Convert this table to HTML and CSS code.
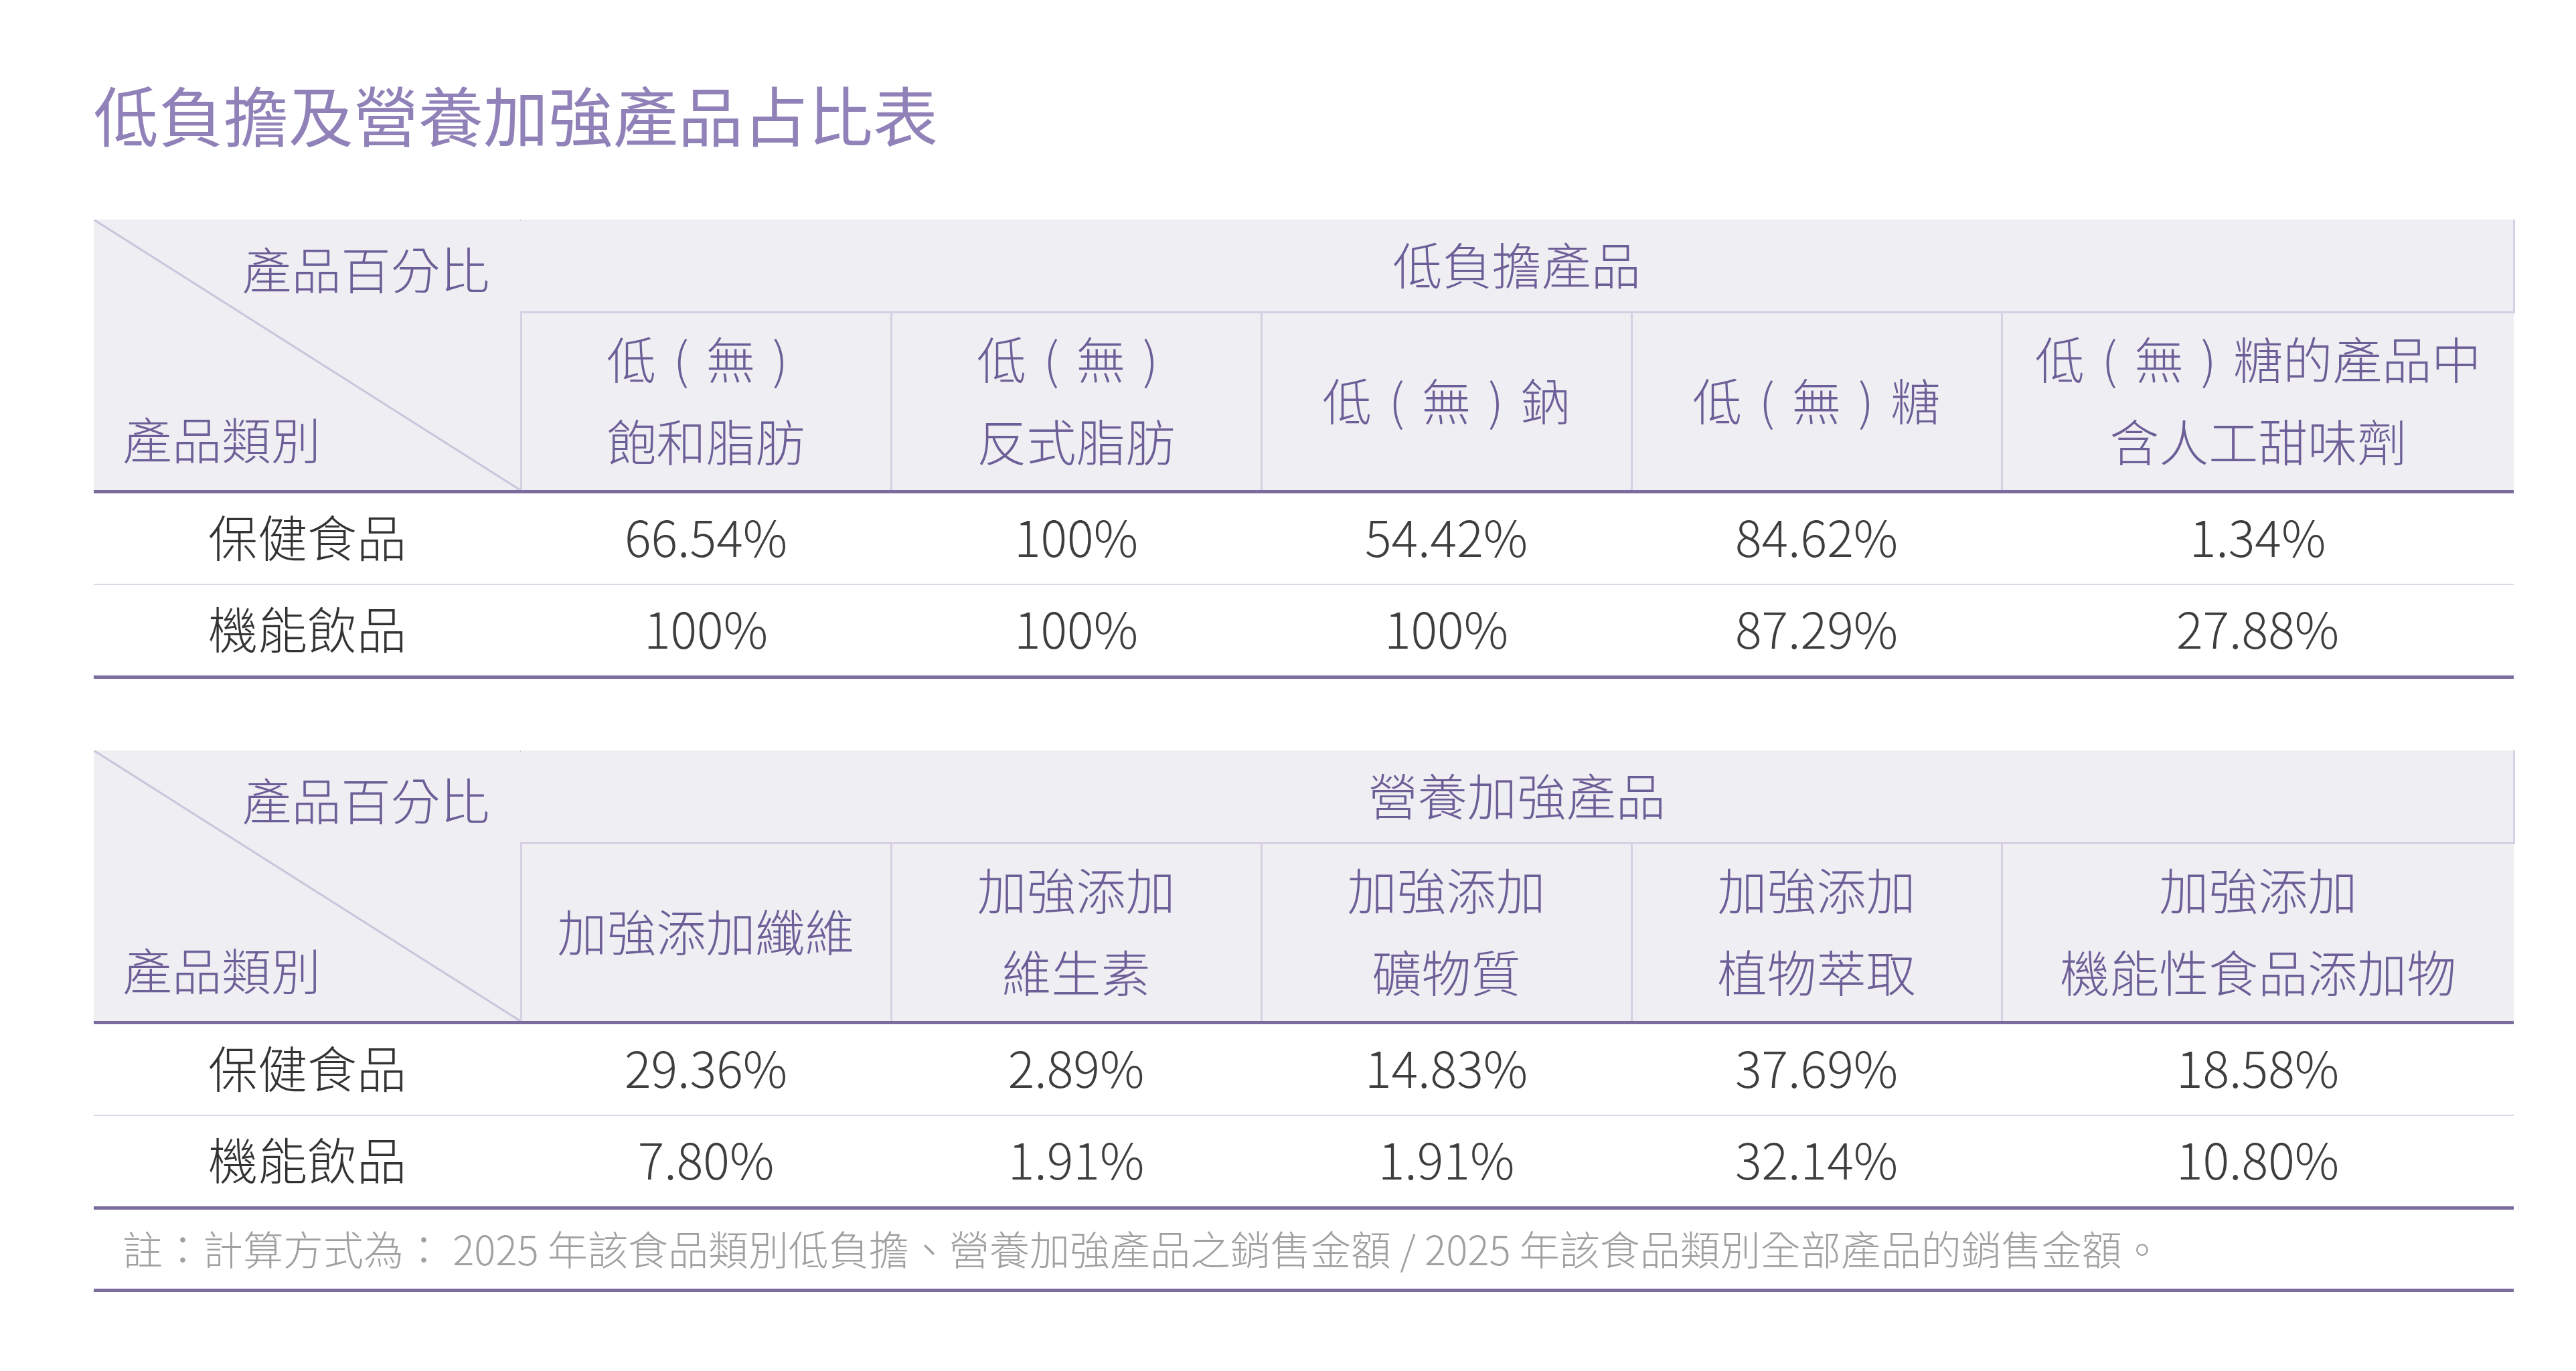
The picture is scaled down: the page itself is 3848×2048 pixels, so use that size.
FILE: index.html
```html
<!DOCTYPE html>
<html lang="zh-Hant">
<head>
<meta charset="utf-8">
<title>低負擔及營養加強產品占比表</title>
<link rel="stylesheet" href="styles.css">
</head>
<body>
<main class="page">
  <h1 class="title">低負擔及營養加強產品占比表</h1>

  <table class="ratio">
    <colgroup>
      <col class="c-cat"><col class="c-mid"><col class="c-mid"><col class="c-mid"><col class="c-mid"><col class="c-last">
    </colgroup>
    <thead>
      <tr class="h1">
        <th rowspan="2" class="corner">
          <div class="corner-box">
            <span class="corner-top">產品百分比</span>
            <span class="corner-bottom">產品類別</span>
          </div>
        </th>
        <th colspan="5" class="group">低負擔產品</th>
      </tr>
      <tr class="h2">
        <th>低<span class="paren">(</span>無<span class="paren">)</span><br>飽和脂肪</th>
        <th>低<span class="paren">(</span>無<span class="paren">)</span><br>反式脂肪</th>
        <th>低<span class="paren">(</span>無<span class="paren">)</span>鈉</th>
        <th>低<span class="paren">(</span>無<span class="paren">)</span>糖</th>
        <th class="last">低<span class="paren">(</span>無<span class="paren">)</span>糖的產品中<br>含人工甜味劑</th>
      </tr>
    </thead>
    <tbody>
      <tr class="r1">
        <td class="cat">保健食品</td><td>66.54%</td><td>100%</td><td>54.42%</td><td>84.62%</td><td>1.34%</td>
      </tr>
      <tr class="r2">
        <td class="cat">機能飲品</td><td>100%</td><td>100%</td><td>100%</td><td>87.29%</td><td>27.88%</td>
      </tr>
    </tbody>
  </table>

  <table class="ratio second">
    <colgroup>
      <col class="c-cat"><col class="c-mid"><col class="c-mid"><col class="c-mid"><col class="c-mid"><col class="c-last">
    </colgroup>
    <thead>
      <tr class="h1">
        <th rowspan="2" class="corner">
          <div class="corner-box">
            <span class="corner-top">產品百分比</span>
            <span class="corner-bottom">產品類別</span>
          </div>
        </th>
        <th colspan="5" class="group">營養加強產品</th>
      </tr>
      <tr class="h2">
        <th>加強添加纖維</th>
        <th>加強添加<br>維生素</th>
        <th>加強添加<br>礦物質</th>
        <th>加強添加<br>植物萃取</th>
        <th class="last">加強添加<br>機能性食品添加物</th>
      </tr>
    </thead>
    <tbody>
      <tr class="r1">
        <td class="cat">保健食品</td><td>29.36%</td><td>2.89%</td><td>14.83%</td><td>37.69%</td><td>18.58%</td>
      </tr>
      <tr class="r2">
        <td class="cat">機能飲品</td><td>7.80%</td><td>1.91%</td><td>1.91%</td><td>32.14%</td><td>10.80%</td>
      </tr>
    </tbody>
  </table>

  <p class="note">註：計算方式為： 2025 年該食品類別低負擔、營養加強產品之銷售金額 / 2025 年該食品類別全部產品的銷售金額。</p>
</main>
</body>
</html>
```

FILE: styles.css
```css
html, body {
  margin: 0;
  padding: 0;
  background: #ffffff;
}

body {
  font-family: "Noto Sans CJK TC", "Noto Sans", sans-serif;
  width: 3848px;
  height: 2048px;
  overflow: hidden;
}

.page {
  padding: 111px 93px 0 140px;
}

.title {
  margin: 0;
  font-size: 97px;
  line-height: 116px;
  font-weight: 400;
  color: #9082b8;
  letter-spacing: 0;
}

.ratio {
  margin-top: 101px;
  width: 3615px;
  border-collapse: collapse;
  table-layout: fixed;
}

.ratio.second {
  margin-top: 107px;
}

.c-cat { width: 638px; }
.c-mid { width: 553px; }
.c-last { width: 765px; }

.ratio th {
  background: #efeef2;
  color: #6c5e97;
  font-weight: 300;
  font-size: 74px;
  padding: 0;
  text-align: center;
  vertical-align: middle;
}

.paren {
  display: inline-block;
  width: 1em;
  text-align: center;
}

.ratio .h1 .group {
  height: 130px;
  padding-bottom: 7px;
  line-height: 120px;
  border-bottom: 3px solid #d6d0e2;
  border-right: 3px solid #d6d0e2;
}

.ratio .h2 th {
  height: 254px;
  padding-bottom: 10px;
  line-height: 123px;
  border-left: 3px solid #d6d0e2;
  border-bottom: 5px solid #7b6c9e;
}

.ratio th.corner {
  vertical-align: top;
  padding: 0;
  border-bottom: 5px solid #7b6c9e;
  background-color: #efeef2;
  background-image: linear-gradient(to top right,
    transparent calc(50% - 2px),
    #cbc4da calc(50% - 1px),
    #cbc4da calc(50% + 1px),
    transparent calc(50% + 2px));
}

.corner-box {
  height: 401px;
  box-sizing: border-box;
  padding: 3px 45px 14px 43px;
  display: flex;
  flex-direction: column;
  justify-content: space-between;
}

.corner-top {
  display: block;
  text-align: right;
  line-height: 137px;
}

.corner-bottom {
  display: block;
  text-align: left;
  line-height: 123px;
}

.ratio td {
  padding: 0 0 10px 0;
  text-align: center;
  vertical-align: middle;
  color: #3e3e3e;
  font-weight: 300;
  font-size: 74px;
  line-height: 100px;
}

.ratio td.cat {
  color: #333333;
}

.ratio .r1 td {
  height: 125px;
  border-bottom: 2px solid #dcd8e6;
}

.ratio .r2 td {
  height: 125px;
  border-bottom: 5px solid #7b6c9e;
}

.note {
  margin: 0;
  width: 3615px;
  box-sizing: border-box;
  height: 123px;
  padding: 0 0 10px 43px;
  font-size: 60px;
  line-height: 113px;
  font-weight: 300;
  color: #a0a0a0;
  border-bottom: 5px solid #7b6c9e;
  white-space: nowrap;
}
```
